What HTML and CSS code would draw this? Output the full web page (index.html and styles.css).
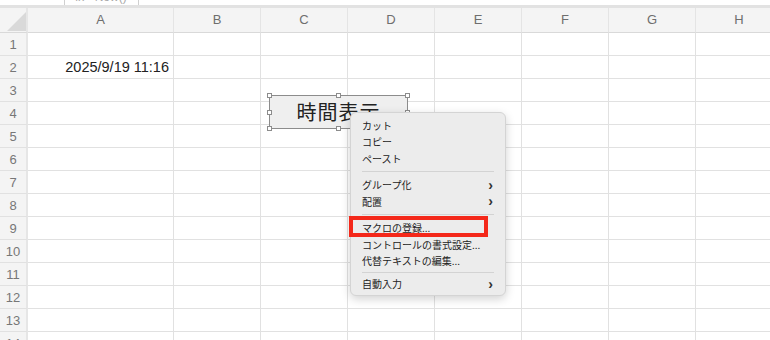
FILE: index.html
```html
<!DOCTYPE html>
<html lang="ja">
<head>
    <meta charset="UTF-8">
    <meta name="viewport" content="width=device-width, initial-scale=1.0">
    <title>時間表示</title>
    <link rel="stylesheet" href="styles.css">
</head>
<body>
    <div class="sheet">
        <div class="formula-bar">
            <div class="name-box"><span class="caret">⌄</span></div>
            <div class="fx-box"><span class="fx-text">fx  =Now()</span></div>
            <div class="formula"></div>
        </div>
        <div class="grid" id="grid">
            <!-- セルはスクリプトで生成 -->
        </div>

        <!-- フォームコントロール（選択中） -->
        <div class="control">
            <span class="control-label">時間表示</span>
            <i class="handle h-tl"></i><i class="handle h-tc"></i><i class="handle h-tr"></i>
            <i class="handle h-ml"></i><i class="handle h-mr"></i>
            <i class="handle h-bl"></i><i class="handle h-bc"></i><i class="handle h-br"></i>
        </div>

        <!-- 右クリックメニュー -->
        <div class="menu">
            <div class="menu-item">カット</div>
            <div class="menu-item">コピー</div>
            <div class="menu-item">ペースト</div>
            <div class="menu-sep"></div>
            <div class="menu-item">グループ化<span class="chev">›</span></div>
            <div class="menu-item">配置<span class="chev">›</span></div>
            <div class="menu-sep"></div>
            <div class="menu-item">マクロの登録...</div>
            <div class="menu-item">コントロールの書式設定...</div>
            <div class="menu-item">代替テキストの編集...</div>
            <div class="menu-sep last"></div>
            <div class="menu-item">自動入力<span class="chev">›</span></div>
            <div class="highlight"></div>
        </div>
    </div>
    <script>
        const cols = ['A', 'B', 'C', 'D', 'E', 'F', 'G', 'H'];
        const rowCount = 14;
        const grid = document.getElementById('grid');

        // 左上の角
        const corner = document.createElement('div');
        corner.className = 'cell corner';
        corner.innerHTML = '<svg width="28" height="25" viewBox="0 0 28 25"><polygon points="26,4 26,23 7,23" fill="#d9d9d9"/></svg>';
        grid.appendChild(corner);

        // 列見出し
        cols.forEach(c => {
            const h = document.createElement('div');
            h.className = 'cell col-head';
            h.textContent = c;
            grid.appendChild(h);
        });

        // 行
        for (let r = 1; r <= rowCount; r++) {
            const rh = document.createElement('div');
            rh.className = 'cell row-head';
            rh.textContent = r;
            grid.appendChild(rh);
            cols.forEach(c => {
                const cell = document.createElement('div');
                cell.className = 'cell';
                if (r === 2 && c === 'A') {
                    cell.classList.add('num');
                    cell.textContent = '2025/9/19 11:16';
                }
                grid.appendChild(cell);
            });
        }
    </script>
</body>
</html>
```

FILE: styles.css
```css
body {
    margin: 0;
    background-color: #fff;
    font-family: "Liberation Sans", "Noto Sans CJK JP", sans-serif;
    color: #222;
    overflow: hidden;
}
.sheet {
    position: relative;
    width: 770px;
    height: 340px;
    overflow: hidden;
}

/* 数式バー（上端だけ見えている） */
.formula-bar {
    display: flex;
    height: 5px;
    border-bottom: 3px solid #e2e2e2;
    overflow: hidden;
}
.name-box {
    width: 64px;
    border-right: 1px solid #d0d0d0;
    position: relative;
}
.caret {
    position: absolute;
    right: 3px;
    top: -11px;
    font-size: 12px;
    color: #777;
}
.fx-box {
    width: 73px;
    border-right: 1px solid #d0d0d0;
    overflow: hidden;
}
.fx-text {
    display: block;
    margin-top: -10px;
    padding-left: 10px;
    font-size: 12px;
    color: #aaa;
    white-space: nowrap;
}
.formula {
    flex: 1;
}

/* シート */
.grid {
    display: grid;
    grid-template-columns: 28px 146px repeat(7, 87px);
    grid-template-rows: 25px repeat(14, 23px);
}
.cell {
    box-sizing: border-box;
    border-right: 1px solid #e1e1e1;
    border-bottom: 1px solid #e1e1e1;
}
.corner {
    background-color: #f4f4f4;
    border-right: 2px solid #e6e6e6;
    border-bottom: 1px solid #d9d9d9;
}
.corner svg {
    display: block;
}
.col-head {
    background-color: #f4f4f4;
    border-bottom: 1px solid #d9d9d9;
    border-right: 1px solid #e4e4e4;
    text-align: center;
    line-height: 24px;
    font-size: 13px;
    color: #6e6e6e;
}
.row-head {
    background-color: #f4f4f4;
    border-right: 2px solid #e6e6e6;
    text-align: center;
    line-height: 23px;
    font-size: 13px;
    color: #777;
}
.num {
    text-align: right;
    padding-right: 4px;
    line-height: 23px;
    font-size: 14.5px;
    color: #222;
}

/* ボタン */
.control {
    position: absolute;
    left: 269px;
    top: 95px;
    width: 139px;
    height: 34px;
    box-sizing: border-box;
    border: 1px solid #8c8c8c;
    background-color: #efefef;
    text-align: center;
    line-height: 32px;
}
.control-label {
    font-family: "Noto Sans CJK JP", sans-serif;
    font-size: 20px;
    color: #222;
    letter-spacing: 1px;
}
.handle {
    position: absolute;
    width: 5px;
    height: 5px;
    box-sizing: border-box;
    background-color: #fff;
    border: 1px solid #8c8c8c;
}
.h-tl { left: -3px; top: -3px; }
.h-tc { left: 66px; top: -3px; }
.h-tr { right: -3px; top: -3px; }
.h-ml { left: -3px; top: 14px; }
.h-mr { right: -3px; top: 14px; }
.h-bl { left: -3px; bottom: -3px; }
.h-bc { left: 66px; bottom: -3px; }
.h-br { right: -3px; bottom: -3px; }

/* コンテキストメニュー */
.menu {
    position: absolute;
    left: 350px;
    top: 112px;
    width: 156px;
    box-sizing: border-box;
    padding: 4px 0 3px;
    background-color: #ececec;
    border: 1px solid #d4d4d4;
    border-radius: 6px;
    box-shadow: 0 3px 10px rgba(0, 0, 0, 0.18);
    font-family: "Noto Sans CJK JP", sans-serif;
    font-size: 10px;
    color: #222;
}
.menu-item {
    display: flex;
    justify-content: space-between;
    align-items: center;
    height: 16.5px;
    padding: 0 12px 0 11px;
}
.chev {
    font-family: "Liberation Sans", sans-serif;
    font-size: 14px;
    font-weight: bold;
    color: #333;
}
.menu-sep {
    height: 1px;
    margin: 4.5px 11px;
    background-color: #d3d3d3;
}
.menu-sep.last {
    margin: 3px 11px 2.5px;
}
.highlight {
    position: absolute;
    left: -2px;
    top: 103px;
    width: 139px;
    height: 21px;
    box-sizing: border-box;
    border: 4px solid #f4281a;
}
```
